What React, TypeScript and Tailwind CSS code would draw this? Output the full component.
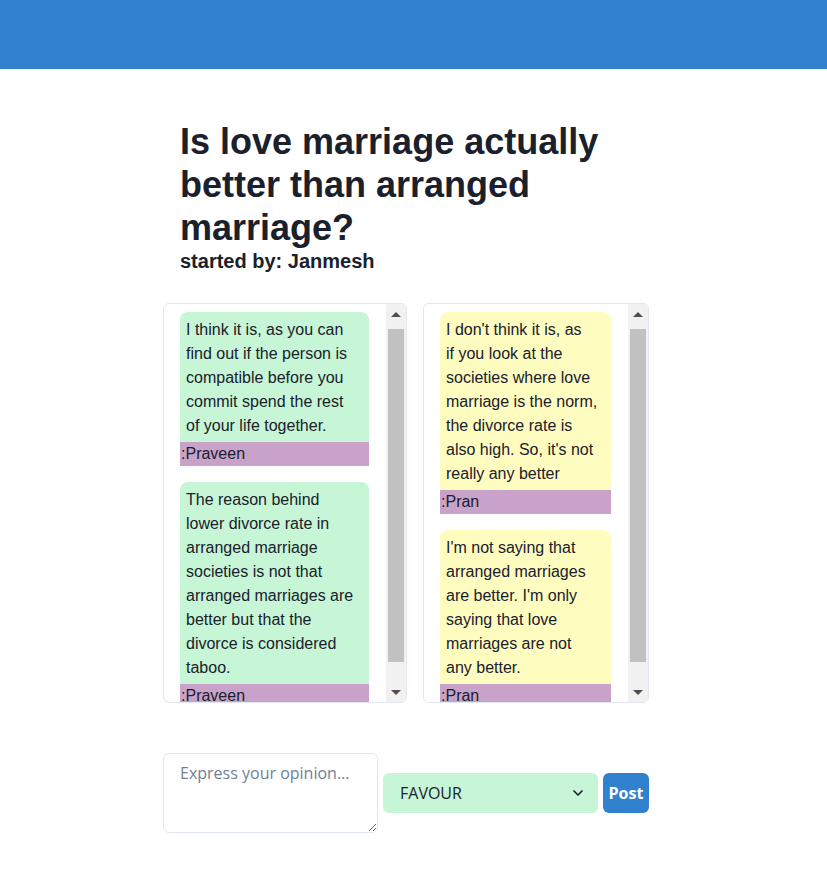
import React from 'react';
import { ChevronDown } from 'lucide-react';

type Message = {
  lines: string[];
  author: string;
};

const favour: Message[] = [
  {
    lines: [
      'I think it is, as you can',
      'find out if the person is',
      'compatible before you',
      'commit spend the rest',
      'of your life together.'
    ],
    author: 'Praveen'
  },
  {
    lines: [
      'The reason behind',
      'lower divorce rate in',
      'arranged marriage',
      'societies is not that',
      'arranged marriages are',
      'better but that the',
      'divorce is considered',
      'taboo.'
    ],
    author: 'Praveen'
  }
];

const against: Message[] = [
  {
    lines: [
      "I don't think it is, as",
      'if you look at the',
      'societies where love',
      'marriage is the norm,',
      'the divorce rate is',
      "also high. So, it's not",
      'really any better'
    ],
    author: 'Pran'
  },
  {
    lines: [
      "I'm not saying that",
      'arranged marriages',
      "are better. I'm only",
      'saying that love',
      'marriages are not',
      'any better.'
    ],
    author: 'Pran'
  }
];

const chatFont = { fontFamily: '"Comic Sans MS", "Liberation Sans", sans-serif' };

const Bubble: React.FC<{ msg: Message; side: 'favour' | 'against' }> = ({ msg, side }) => (
  <div className="mb-4" style={chatFont}>
    <div
      className={`rounded-t-lg pt-[6px] pb-[4px] px-[6px] text-base leading-6 text-[#1a202c] whitespace-nowrap ${
        side === 'favour' ? 'bg-[#c6f6d5]' : 'bg-[#fefcbf]'
      }`}
    >
      {msg.lines.map((l, i) => (
        <div key={i}>{l}</div>
      ))}
    </div>
    <div className="bg-[#c8a2c8] h-6 leading-6 pl-px text-base text-[#1a202c]">:{msg.author}</div>
  </div>
);

// classic windows-style scrollbar, drawn next to the clipped list
const Scrollbar: React.FC = () => (
  <div className="w-5 shrink-0 bg-[#f1f1f1] flex flex-col">
    <div className="h-5 flex items-center justify-center">
      <div className="w-0 h-0 border-x-[5px] border-x-transparent border-b-[5px] border-b-[#505050]" />
    </div>
    <div className="flex-1 px-[2px]">
      <div className="mt-[5px] h-[333px] bg-[#c1c1c1]" />
    </div>
    <div className="h-5 flex items-center justify-center">
      <div className="w-0 h-0 border-x-[5px] border-x-transparent border-t-[5px] border-t-[#505050]" />
    </div>
  </div>
);

const Column: React.FC<{ width: string; items: Message[]; side: 'favour' | 'against' }> = ({ width, items, side }) => (
  <div className={`${width} h-[400px] border border-[#e2e8f0] rounded-md overflow-hidden flex`}>
    <div className="flex-1 min-w-0 overflow-hidden pt-2 pl-4 pr-[17px]">
      {items.map((m, i) => (
        <Bubble key={i} msg={m} side={side} />
      ))}
    </div>
    <Scrollbar />
  </div>
);

export default function App() {
  return (
    <div className="min-h-screen bg-white" style={{ fontFamily: '"Open Sans", "Noto Sans", sans-serif' }}>
      {/* Header */}
      <div className="h-[69px] bg-[#3182ce]" />

      <div className="pl-[163px] w-[649px]">
        {/* Title */}
        <div className="pl-[17px] pt-[51px] w-[470px]" style={{ fontFamily: '"Liberation Sans", Arial, sans-serif' }}>
          <h1 className="text-[36px] leading-[43px] font-bold text-[#1a202c]">
            Is love marriage actually better than arranged marriage?
          </h1>
          <h2 className="text-xl leading-6 font-bold text-[#1a202c]">started by: Janmesh</h2>
        </div>

        {/* Debate columns */}
        <div className="flex gap-4 mt-[30px]">
          <Column width="w-[244px]" items={favour} side="favour" />
          <Column width="w-[226px]" items={against} side="against" />
        </div>

        {/* Post form */}
        <div className="flex items-center gap-[5px] mt-[50px]">
          <textarea
            placeholder="Express your opinion..."
            className="w-[215px] h-20 border border-[#e2e8f0] rounded-md px-4 pt-[7px] text-base placeholder:text-[#718096] outline-none"
          />
          <div className="relative w-[215px] h-10">
            <select className="appearance-none w-full h-full bg-[#c6f6d5] rounded-md pl-[17px] pr-8 text-base text-[#1a202c] outline-none">
              <option>FAVOUR</option>
              <option>AGAINST</option>
            </select>
            <ChevronDown className="absolute right-[12px] top-1/2 -translate-y-1/2 w-4 h-4 text-[#1a202c] pointer-events-none" strokeWidth={2.5} />
          </div>
          <button className="w-[46px] h-10 bg-[#3182ce] rounded-md text-white font-bold text-base">Post</button>
        </div>
      </div>
    </div>
  );
}
